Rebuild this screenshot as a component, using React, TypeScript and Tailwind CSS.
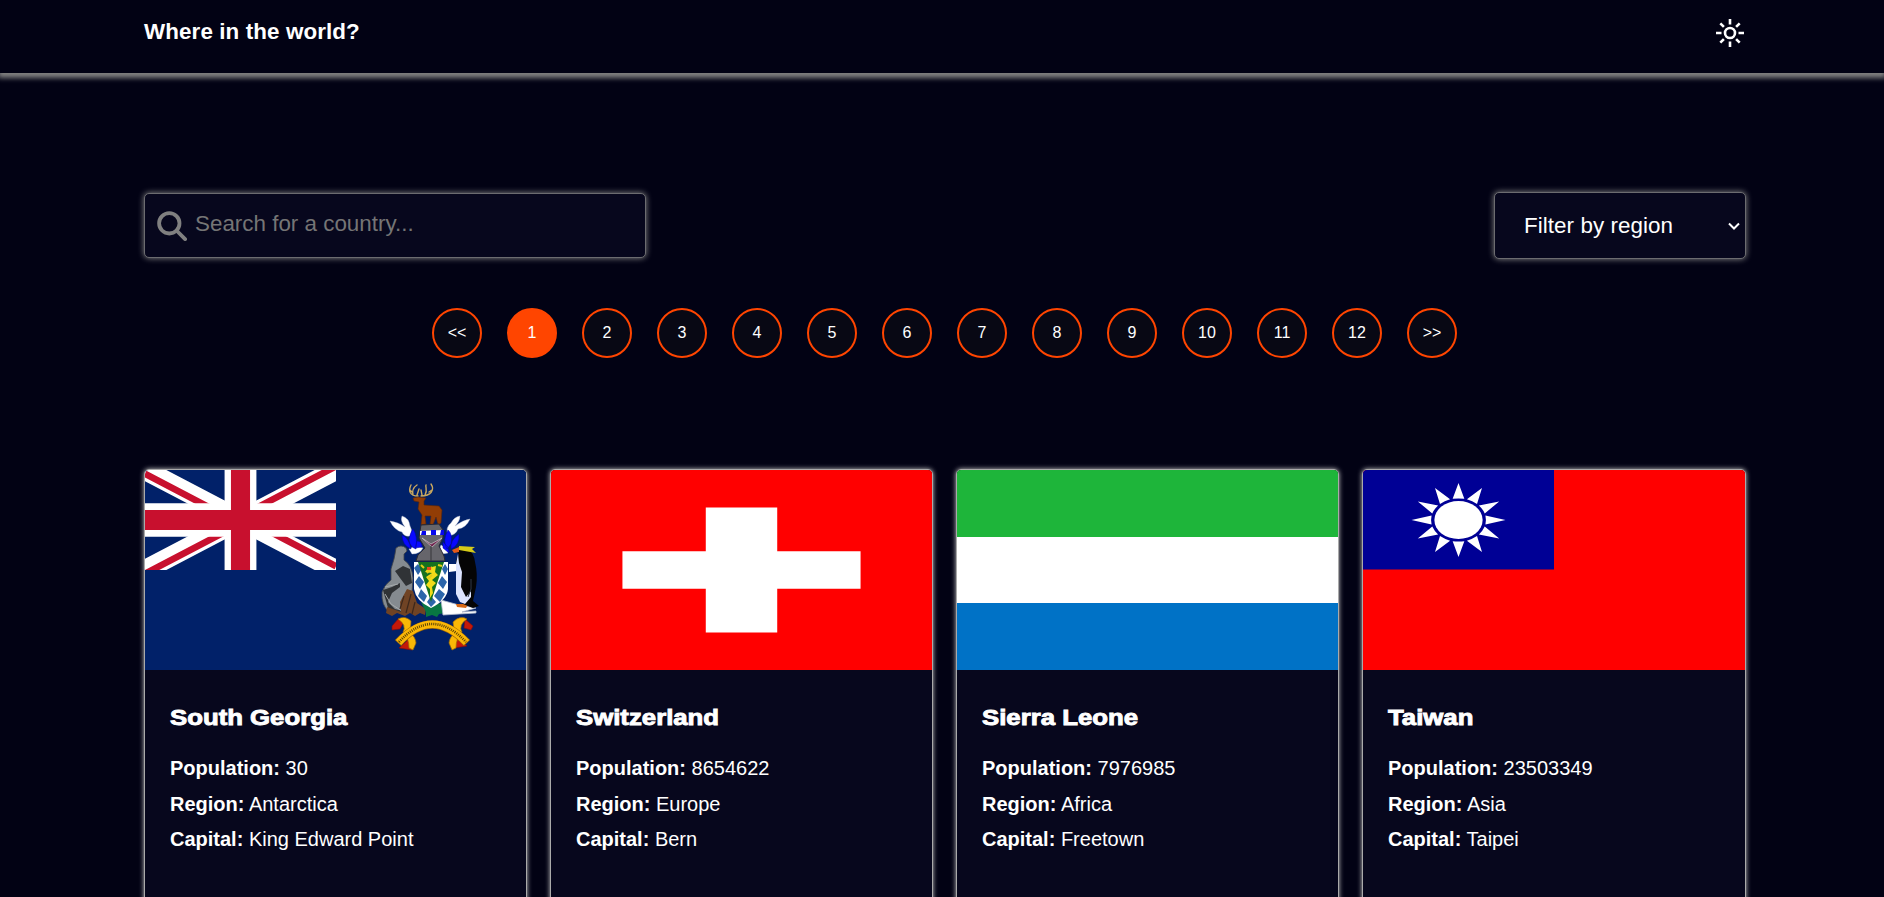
import React from "react";

function UnionJack() {
  return (
    <svg width="191" height="100" viewBox="0 0 60 30" preserveAspectRatio="none">
      <path d="M0 0L60 30M60 0L0 30" stroke="#fff" strokeWidth="6" />
      <path d="M0 1.118L30 16.118M30 13.882L60 28.882M30 13.882L60 -1.118M0 31.118L30 16.118" stroke="#c8102e" strokeWidth="2" />
      <path d="M30 0V30M0 15H60" stroke="#fff" strokeWidth="10" />
      <path d="M30 0V30M0 15H60" stroke="#c8102e" strokeWidth="6" />
    </svg>
  );
}

function SouthGeorgiaFlag() {
  return (
    <svg className="block h-[200px] w-full" viewBox="0 0 381 200" preserveAspectRatio="none">
      <rect width="381" height="200" fill="#012169" />
      <UnionJack />
      {/* antlers and stag */}
      <g fill="none" stroke="#c9a75e" strokeWidth="1.4" strokeLinecap="round">
        <path d="M273 26C265 26 263 21 266 15M268 25C267 21 269 17 272 15M272 25L274 19M276 26C286 26 290 20 286 14M280 25C283 20 280 17 281 15M277 25L276 20M265 20L267 22M287 20L284 22" />
      </g>
      <path d="M268 28L273 27L281 28L279 31L279 35L294 36L297 40L296 53L293 55L291 47L288 55L285 54L286 46L280 46L281 54L276 55L277 45L273 39L274 32L269 31Z" fill="#923d05" stroke="#5c2608" strokeWidth=".6" />
      {/* mantling */}
      <g fill="#fff" stroke="#b9c1d4" strokeWidth=".4">
        <path d="M265 66Q259 67 257 62Q249 60 245 51Q253 52 260 57Q255 51 257 46Q264 48 265 56Q268 61 265 66Z" />
        <path d="M303 66Q300 57 306 53Q309 47 315 46Q315 51 310 56Q318 50 325 49Q321 58 313 59Q311 65 303 66Z" />
        <path d="M264 79Q270 75 278 78Q275 84 267 84ZM296 75Q302 78 303 83Q297 85 293 82Z" />
      </g>
      <g fill="#0909ff" stroke="#0202a3" strokeWidth=".5">
        <path d="M268 59Q273 66 271 79Q265 77 264 70Q265 63 268 59ZM257 65Q264 68 266 79Q257 75 257 65ZM272 71Q277 71 277 77L270 78Z" />
        <path d="M303 60Q308 64 306 74L302 79Q297 70 303 60ZM314 64Q315 75 306 79Q305 70 314 64ZM298 72L303 77L304 83L298 78Z" />
      </g>
      <path d="M276 55L294 54L298 60L298 68L294 76L299 86L300 91L271 91L273 85L280 78L274 68L275 61Z" fill="#66656b" stroke="#292933" strokeWidth="1" />
      <path d="M275 61L299 60L299 65L275 65Z" fill="#fff" />
      <path d="M277 61H281V65H276ZM286 60H291V65H286ZM296 60H299V65H295Z" fill="#0707ed" />
      <path d="M277 68L286 74L297 68L287 77Z" fill="#71264f" stroke="#cfcfd3" strokeWidth=".7" />
      <path d="M286 76V91" stroke="#36363b" />
      {/* seal */}
      <path d="M251 78Q256 74 261 78L262 81L259 84V90Q267 95 268 108L267 123L264 136L257 142H244Q236 135 237 122Q240 114 246 110V99L249 89L250 84Z" fill="#858b90" stroke="#404448" strokeWidth=".8" />
      <path d="M250 101L258 96L265 99L267 113L261 116L255 108ZM238 120L247 117L255 113L255 117L247 123L243 132L250 139L262 142L256 144L243 138Z" fill="#303336" />
      <path d="M240 117L253 114M240 124L246 134L257 141" stroke="#a6aaac" fill="none" />
      {/* rock and ground */}
      <path d="M262 119L268 121L272 133L281 139L280 145L275 143L270 146L265 143L260 146L252 143L247 146L241 143L242 137L256 142L255 132Z" fill="#704324" />
      <path d="M259 126L255 139M266 124L261 143M270 132L267 144" stroke="#3d271b" strokeWidth="1.2" />
      <path d="M276 132L285 136L297 133L301 143L294 144L292 147L287 145L281 147L281 142Z" fill="#087642" />
      <path d="M296 130L314 135L331 138L317 142L331 141V143L298 145Z" fill="#fff" stroke="#b3bbcb" strokeWidth=".8" />
      <path d="M311 134H323L321 138L312 137Z" fill="#d66816" />
      {/* shield */}
      <path d="M269 92H303L303 119Q302 130 286 138Q271 131 269 119Z" fill="#fff" />
      <g fill="#2c65aa">
        <path d="M269 98L273 94L277 99L273 105ZM270 112L274 106L279 112L275 119ZM273 126L276 119L282 126L279 132ZM297 99L300 94L303 99L300 105ZM293 113L297 106L302 112L298 119ZM289 126L294 119L300 124L295 132ZM286 137L282 132L286 126L291 132Z" />
      </g>
      <path d="M273 92H299L286 132Z" fill="#16721d" />
      <path d="M283 98L291 96L290 102L293 105L287 110L291 113L287 117L288 123L285 128L285 119L281 115L284 111L281 107L287 103L280 102Z" fill="#f2db18" />
      <path d="M276 95L279 98M293 95L297 96M287 97L282 103M287 105L283 109" stroke="#e3cc19" strokeWidth="2" />
      <path d="M282 97H286V100H282Z" fill="#ec471c" />
      <path d="M304 94H312V101L304 102Z" fill="#fff" />
      {/* penguin */}
      <path d="M309 80Q315 75 323 79Q329 83 330 92Q333 104 331 117L328 131L334 136L328 138L318 134L313 127L311 111L311 91L314 84Z" fill="#050505" />
      <path d="M313 84L311 94L311 124L315 132L320 134L326 127V121L321 127L316 117L317 102L314 93Z" fill="#dce4ff" />
      <path d="M307 80L314 77V82L309 83Z" fill="#e45a19" />
      <path d="M314 76L330 77L327 79L331 83L314 80Z" fill="#d6cc18" />
      <path d="M326 109V119L323 127" stroke="#333b4a" strokeWidth="1" />
      {/* scroll */}
      <path d="M254 148L247 156V160L255 159L260 150ZM254 178L267 180L265 168ZM320 149L328 156L326 160L319 158ZM312 167L309 178L322 176Z" fill="#c51808" stroke="#830c0b" strokeWidth=".6" />
      <path d="M253 149Q260 145 266 151Q266 158 264 161Q271 168 271 173L268 180L264 178Q264 168 258 162Q262 155 253 149Z" fill="#fab706" stroke="#9a6509" strokeWidth=".7" />
      <path d="M322 149Q315 145 308 152Q308 158 311 161Q304 168 304 173L307 180L311 178Q311 168 317 162Q313 155 322 149Z" fill="#fab706" stroke="#9a6509" strokeWidth=".7" />
      <path d="M253 173Q287 136 322 173" fill="none" stroke="#9a6509" strokeWidth="8.6" />
      <path d="M253.500 172.500Q287 136 321.500 172.500" fill="none" stroke="#fab706" strokeWidth="7.4" />
      <path d="M254 172Q287 136 321 172" fill="none" stroke="#5a4206" strokeWidth="2.6" strokeDasharray="1 1.1" />
    </svg>
  );
}

function SwitzerlandFlag() {
  return (
    <svg className="block h-[200px] w-full" viewBox="0 0 32 32" preserveAspectRatio="none">
      <path fill="#f00" d="M0 0h32v32H0z" />
      <path fill="#fff" d="M13 6h6v7h7v6h-7v7h-6v-7H6v-6h7z" />
    </svg>
  );
}

function SierraLeoneFlag() {
  return (
    <div className="flex h-[200px] flex-col">
      <div className="flex-1 bg-[#1eb53a]" />
      <div className="flex-1 bg-white" />
      <div className="flex-1 bg-[#0072c6]" />
    </div>
  );
}

function TaiwanFlag() {
  const rays = Array.from({ length: 12 }, (_, i) => i * 30);
  return (
    <svg className="block h-[200px] w-full" viewBox="0 0 382 200" preserveAspectRatio="none">
      <rect width="382" height="200" fill="#f00" />
      <rect width="191" height="99.5" fill="#000095" />
      <g transform="translate(95.5 50) scale(1.27 1)" fill="#fff">
        <circle r="19" />
        {rays.map((a) => (
          <path key={a} transform={`rotate(${a})`} d="M0 -37L4.6 -21.2Q0 -22 -4.6 -21.2Z" />
        ))}
      </g>
    </svg>
  );
}

const countries = [
  { name: "South Georgia", population: "30", region: "Antarctica", capital: "King Edward Point", Flag: SouthGeorgiaFlag },
  { name: "Switzerland", population: "8654622", region: "Europe", capital: "Bern", Flag: SwitzerlandFlag },
  { name: "Sierra Leone", population: "7976985", region: "Africa", capital: "Freetown", Flag: SierraLeoneFlag },
  { name: "Taiwan", population: "23503349", region: "Asia", capital: "Taipei", Flag: TaiwanFlag },
];

const pages = ["<<", "1", "2", "3", "4", "5", "6", "7", "8", "9", "10", "11", "12", ">>"];

function Sun() {
  return (
    <svg className="h-7 w-7" viewBox="0 0 28 28" fill="none" stroke="#fff" strokeWidth="2.6">
      <circle cx="14" cy="14" r="5" />
      <path d="M14 0v5.500M14 22.500V28M0 14h5.500M22.500 14H28M4.300 4.300l3.600 3.600M20.100 20.100l3.600 3.600M4.300 23.700l3.600-3.600M20.100 7.900l3.600-3.600" />
    </svg>
  );
}

export default function App() {
  return (
    <div className="h-[897px] overflow-hidden bg-[#020214] font-['Liberation_Sans',Arial,sans-serif] text-white">
      <header className="flex h-[73px] items-start justify-between pr-[140px] pl-36 shadow-[0_3px_5px_2px_#808080]">
        <h1 className="mt-[19px] text-[22.4px] leading-[26px] font-bold tracking-[0.1px]">Where in the world?</h1>
        <button className="mt-[19px]" aria-label="Toggle theme">
          <Sun />
        </button>
      </header>

      <main className="mr-[138px] ml-36 pt-[119px]">
        <div className="flex h-[67px] items-center justify-between">
          <label className="flex h-[65px] w-[502px] items-center rounded-[5px] border border-[#6c6c70] bg-[#07071d] pl-3 shadow-[0_0_6px_#8c8c8c]">
            <svg className="h-[30px] w-[30px]" viewBox="0 0 30 30" fill="none" stroke="#808080" strokeWidth="3.8">
              <circle cx="12.3" cy="12.3" r="10.2" />
              <path d="M19.500 19.500l8.600 8.600" strokeWidth="3.8" strokeLinecap="round" />
            </svg>
            <input
              className="mb-[3px] ml-2 w-[400px] bg-transparent text-[22.4px] outline-none placeholder:text-[#757575]"
              placeholder="Search for a country..."
            />
          </label>
          <button className="flex h-[67px] w-[252px] items-center justify-between rounded-[5px] border border-[#6c6c70] bg-[#07071d] pr-[5px] pl-[29px] text-[22.4px] tracking-[0.06px] shadow-[0_0_6px_#8c8c8c]">
            Filter by region
            <svg className="h-3 w-3" viewBox="0 0 12 12" fill="none" stroke="#fff" strokeWidth="2">
              <path d="M1 3.500l5 5 5-5" />
            </svg>
          </button>
        </div>

        <nav className="mt-[49px] flex justify-center gap-[25px] pr-0.5">
          {pages.map((p) => (
            <button
              key={p}
              className={
                p === "1"
                  ? "h-[50px] w-[50px] rounded-full border-2 border-[#ff4500] bg-[#ff4500] pb-px pl-px text-base"
                  : "h-[50px] w-[50px] rounded-full border-2 border-[#ff4500] bg-[#080814] pb-px pl-px text-base"
              }
            >
              {p}
            </button>
          ))}
        </nav>

        <section className="mt-[111px] grid grid-cols-[383px_383px_383px_384px] gap-[23px]">
          {countries.map(({ name, population, region, capital, Flag }) => (
            <article key={name} className="h-[460px] overflow-hidden rounded-[5px] border border-[#aaa] bg-[#07071d] shadow-[0_0_5px_#c8c8c8]">
              <Flag />
              <div className="px-[25px] pt-8">
                <h2 className="origin-left scale-x-[1.15] text-[22.4px] leading-8 font-black [-webkit-text-stroke:0.9px_currentColor]">{name}</h2>
                <div className="mt-[17px] text-[20px] leading-[35.5px]">
                  <p><b>Population:</b> {population}</p>
                  <p><b>Region:</b> {region}</p>
                  <p><b>Capital:</b> {capital}</p>
                </div>
              </div>
            </article>
          ))}
        </section>
      </main>
    </div>
  );
}
